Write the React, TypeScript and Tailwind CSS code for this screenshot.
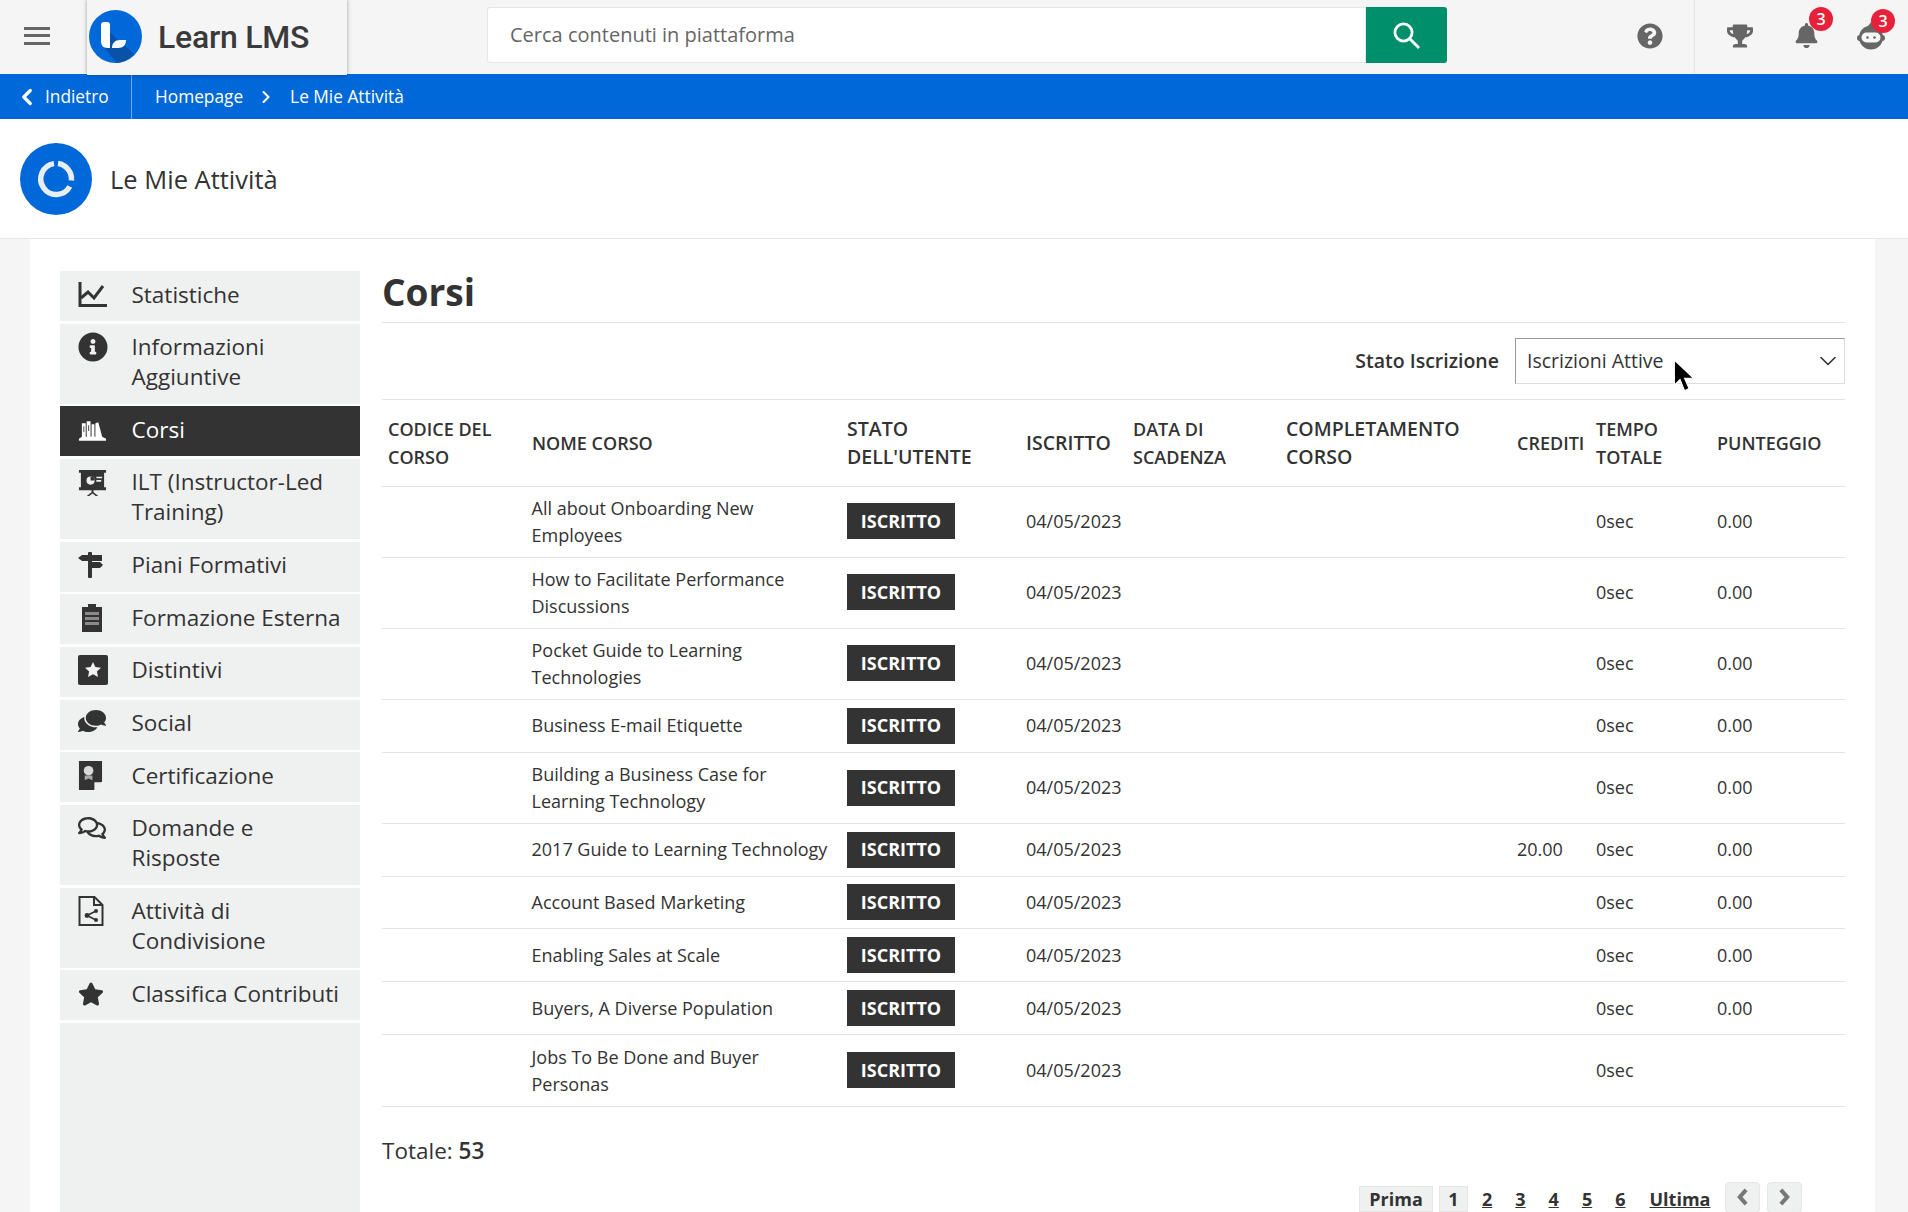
import React from "react";
import { FaBell, FaComments, FaInfoCircle, FaQuestionCircle, FaRegComments, FaStar, FaTrophy } from "react-icons/fa";
import { ChevronDown, ChevronLeft, ChevronRight } from "lucide-react";

const Chart = () => (
  <svg viewBox="0 0 29 26" className="w-[29px] h-[26px]" fill="none" stroke="currentColor">
    <path d="M2 0v23.5h27" strokeWidth="3" />
    <path d="M3 16l7-6 6 6 9-12" strokeWidth="3" />
  </svg>
);
const Sign = () => (
  <svg viewBox="0 0 26 26" className="w-[26px] h-[26px]" fill="currentColor">
    <rect x="10" y="0" width="4" height="26" rx="1" />
    <path d="M4 3h20v6H4L0 6z" />
    <path d="M14 10h8l3 3-3 3h-8z" />
  </svg>
);
const Clip = () => (
  <svg viewBox="0 0 22 29" className="w-[22px] h-[29px]">
    <path d="M1 4h6V1h8v3h6v25H1z" fill="#333" />
    <path d="M4 9h14v3H4zM4 14h14v3H4zM4 19h14v3H4z" fill="#8a8a8a" />
  </svg>
);
const Books = () => (
  <svg viewBox="0 0 30 24" className="w-[29px] h-[24px]" fill="currentColor">
    <path d="M1 21 L4 19 V5 H8 V19 H9 V3 H13 V19 H14 V6 H17 V19 H18 V5 L21 4 L25 19 L29 21 V23 H1 Z" />
    <path d="M10.6 7h.9v6h-.9zM5.6 8h.9v6h-.9z" fill="#333" />
  </svg>
);
const Board = () => (
  <svg viewBox="0 0 30 30" className="w-[29px] h-[29px]" fill="currentColor">
    <path d="M1 2h28v3h-2v15h2v3H16v2l5 4h-2.6L15 26.5 11.6 29H9l5-4v-2H1v-3h2V5H1z" />
    <circle cx="13" cy="13" r="4.2" fill="#eff0f0" />
    <path d="M13 13V8.8a4.2 4.2 0 0 1 4.2 4.2z" fill="#333" />
    <path d="M19 9h6v1.6h-6zM19 12.5h5v1.6h-5z" fill="#eff0f0" />
  </svg>
);
const Badge = () => (
  <svg viewBox="0 0 30 30" className="w-[30px] h-[30px]">
    <rect width="30" height="30" rx="2" fill="#333" />
    <path d="M15 7l2.4 5 5.6.7-4.1 3.8 1.1 5.5-5-2.8-5 2.8 1.1-5.5L7 12.7l5.6-.7z" fill="#f2f2f2" />
  </svg>
);
const Cert = () => (
  <svg viewBox="0 0 26 30" className="w-[25px] h-[29px]">
    <path d="M1 0h24v21l-8 9H1z" fill="#333" />
    <path d="M25 22v1l-7 7h-1v-8z" fill="#eee" />
    <circle cx="11" cy="10" r="5" fill="#d9d9d9" />
    <path d="M7 15h8v5l-4-2-4 2z" fill="#aaa" />
  </svg>
);
const FileShare = () => (
  <svg viewBox="0 0 26 30" className="w-[26px] h-[30px]" fill="none" stroke="#333" strokeWidth="2">
    <path d="M1.5 1h15l8 8v20h-23z" />
    <path d="M16 1v8h8" />
    <path d="M18 15l-9 4.5 9 4.5" strokeWidth="1.6" />
    <circle cx="18" cy="15" r="2" fill="#333" stroke="none" />
    <circle cx="9" cy="19.5" r="2.4" fill="#333" stroke="none" />
    <circle cx="18" cy="24" r="2" fill="#333" stroke="none" />
  </svg>
);
const Robot = () => (
  <svg viewBox="0 0 28 28" className="w-[28px] h-[28px]">
    <path d="M14 0l3.5 5h-7z" fill="#666" />
    <circle cx="14" cy="15.5" r="12" fill="#666" />
    <rect x="0" y="13" width="28" height="6" rx="3" fill="#666" />
    <rect x="4.5" y="10.5" width="19" height="10" rx="5" fill="#f5f5f5" />
    <circle cx="10.5" cy="15.5" r="1.3" fill="#666" />
    <circle cx="17.5" cy="15.5" r="1.3" fill="#666" />
  </svg>
);
const FatChevron = ({ d }: { d: string }) => (
  <svg viewBox="0 0 14 20" className="w-[13px] h-[18px]" fill="none" stroke="currentColor" strokeWidth="4.5">
    <path d={d} />
  </svg>
);

const side: { label: string[]; icon: React.ReactNode; active?: boolean }[] = [
  { label: ["Statistiche"], icon: <Chart /> },
  { label: ["Informazioni", "Aggiuntive"], icon: <FaInfoCircle size={30} /> },
  { label: ["Corsi"], icon: <Books />, active: true },
  { label: ["ILT (Instructor-Led", "Training)"], icon: <Board /> },
  { label: ["Piani Formativi"], icon: <Sign /> },
  { label: ["Formazione Esterna"], icon: <div className="ml-[3px]"><Clip /></div> },
  { label: ["Distintivi"], icon: <Badge /> },
  { label: ["Social"], icon: <FaComments size={28} className="-scale-x-100 -translate-y-[2px]" /> },
  { label: ["Certificazione"], icon: <Cert /> },
  { label: ["Domande e", "Risposte"], icon: <FaRegComments size={28} /> },
  { label: ["Attività di", "Condivisione"], icon: <FileShare /> },
  { label: ["Classifica Contributi"], icon: <FaStar size={26} /> },
];

const rows: { name: string[]; cred?: string; score?: string }[] = [
  { name: ["All about Onboarding New", "Employees"], score: "0.00" },
  { name: ["How to Facilitate Performance", "Discussions"], score: "0.00" },
  { name: ["Pocket Guide to Learning", "Technologies"], score: "0.00" },
  { name: ["Business E-mail Etiquette"], score: "0.00" },
  { name: ["Building a Business Case for", "Learning Technology"], score: "0.00" },
  { name: ["2017 Guide to Learning Technology"], cred: "20.00", score: "0.00" },
  { name: ["Account Based Marketing"], score: "0.00" },
  { name: ["Enabling Sales at Scale"], score: "0.00" },
  { name: ["Buyers, A Diverse Population"], score: "0.00" },
  { name: ["Jobs To Be Done and Buyer", "Personas"] },
];

const heads: { l: string[]; big?: boolean }[] = [
  { l: ["CODICE DEL", "CORSO"] },
  { l: ["NOME CORSO"] },
  { l: ["STATO", "DELL'UTENTE"], big: true },
  { l: ["ISCRITTO"], big: true },
  { l: ["DATA DI", "SCADENZA"] },
  { l: ["COMPLETAMENTO", "CORSO"], big: true },
  { l: ["CREDITI"] },
  { l: ["TEMPO", "TOTALE"] },
  { l: ["PUNTEGGIO"] },
];

const widths = ["w-[144px]", "w-[315px]", "w-[179px]", "w-[107px]", "w-[153px]", "w-[231px]", "w-[79px]", "w-[121px]", "w-[134px]"];

export default function App() {
  return (
    <div className="relative h-[1212px] overflow-hidden flex flex-col bg-white text-[#333] font-['Open_Sans',sans-serif]">
      <header className="h-[74px] shrink-0 bg-[#f5f5f5] flex items-center relative">
        <button className="w-[87px] h-full flex items-center pl-[24px] pb-[2px] text-[#666]">
          <svg viewBox="0 0 26 18" className="w-[26px] h-[18px]" fill="currentColor">
            <rect width="26" height="3" />
            <rect y="7" width="26" height="3" />
            <rect y="15" width="26" height="3" />
          </svg>
        </button>
        <div className="w-[260px] h-[75px] self-start z-10 bg-[#f5f5f5] flex items-center pl-[2px] pb-[2px] shadow-[0_0_4px_rgba(0,0,0,0.35)]">
          <svg viewBox="0 0 53 53" className="w-[53px] h-[53px] shrink-0">
            <circle cx="26.5" cy="26.5" r="26.5" fill="#0068d9" />
            <path d="M18 20 L45 44 A26.5 26.5 0 0 1 28 53 L16 38 Z" fill="#0a52a8" />
            <path d="M15 12h3a3 3 0 0 1 3 3v23h-3a6 6 0 0 1-6-6V15a3 3 0 0 1 3-3z" fill="#fff" />
            <path d="M23 38c0-5 3-8 8-8h6c0 5-3 8-8 8z" fill="#fff" />
          </svg>
          <span className="ml-[16px] text-[32px] font-medium tracking-[-0.25px] text-[#3a3a3a] font-['Roboto',sans-serif]">Learn LMS</span>
        </div>
        <div className="ml-[140px] flex h-[56px] w-[960px] self-start mt-[7px]">
          <div className="flex-1 bg-white border border-[#e6e6e6] rounded-l-[3px] flex items-center pl-[22px] text-[20px] text-[#666]">
            Cerca contenuti in piattaforma
          </div>
          <div className="w-[81px] bg-[#008f6b] rounded-r-[3px] flex items-center justify-center text-white">
            <svg viewBox="0 0 27 27" className="w-[27px] h-[27px]" fill="none" stroke="currentColor" strokeWidth="2.8">
              <circle cx="10.5" cy="10.5" r="8.6" />
              <path d="M16.5 16.5L26 26" />
            </svg>
          </div>
        </div>
        <div className="flex-1 flex items-center h-full text-[#666] relative">
          <div className="ml-[190px] w-[58px] h-full flex items-center border-r border-[#e3e3e3] pb-[3px]">
            <FaQuestionCircle size={26} />
          </div>
          <div className="ml-[32px] mb-[3px] relative w-[27px]"><FaTrophy size={26} /></div>
          <div className="ml-[40px] mb-[3px] relative">
            <FaBell size={25} />
            <span className="absolute -top-[16px] left-[15px] w-[24px] h-[24px] rounded-full bg-[#e8213a] text-white text-[16px] font-semibold flex items-center justify-center">3</span>
          </div>
          <div className="ml-[38px] mb-[3px] relative">
            <Robot />
            <span className="absolute -top-[13px] left-[14px] w-[24px] h-[24px] rounded-full bg-[#e8213a] text-white text-[16px] font-semibold flex items-center justify-center">3</span>
          </div>
        </div>
      </header>

      <nav className="h-[45px] shrink-0 bg-[#0068d9] flex items-center text-white text-[17.3px] font-medium">
        <div className="w-[132px] h-full border-r border-[#6aa8ea] flex items-center pl-[14px]">
          <ChevronLeft size={26} strokeWidth={3} />
          <span className="ml-[5px]">Indietro</span>
        </div>
        <span className="ml-[23px]">Homepage</span>
        <ChevronRight size={20} strokeWidth={2.5} className="ml-[13px]" />
        <span className="ml-[14px]">Le Mie Attività</span>
      </nav>

      <div className="h-[120px] shrink-0 border-b border-[#e6e6e6] flex items-center pl-[20px]">
        <svg viewBox="0 0 72 72" className="w-[72px] h-[72px]">
          <circle cx="36" cy="36" r="36" fill="#0068d9" />
          <path d="M34 20.6 A15.5 15.5 0 1 0 49.8 43.5" fill="none" stroke="#e8eef5" strokeWidth="5.5" />
          <path d="M38 20.6 A15.5 15.5 0 0 1 51.4 37.5" fill="none" stroke="#e8eef5" strokeWidth="5.5" />
        </svg>
        <h1 className="ml-[18px] mt-[2px] text-[25.5px] font-medium">Le Mie Attività</h1>
      </div>

      <div className="flex-1 min-h-0 bg-[#f5f5f5] pl-[30px] pr-[33px]">
        <div className="h-full bg-white flex pl-[30px] pr-[30px] pt-[32px] gap-[22px]">
          <aside className="w-[300px] shrink-0 flex flex-col gap-[2.6px]">
            {side.map((s) => (
              <div key={s.label[0]} className={`flex pl-[18px] pr-[6px] pt-[8.5px] pb-[11.5px] text-[22.5px] leading-[30px] ${s.active ? "bg-[#333] text-white" : "bg-[#eff0f0] text-[#333]"}`}>
                <div className="w-[53.5px] h-[30px] shrink-0 flex items-center">{s.icon}</div>
                <div className={s.label.length > 1 ? "h-[60.2px]" : ""}>
                  {s.label.map((l) => (
                    <div key={l} className="whitespace-nowrap">{l}</div>
                  ))}
                </div>
              </div>
            ))}
            <div className="flex-1 bg-[#eff0f0]" />
          </aside>

          <main className="flex-1 min-w-0">
            <h2 className="h-[52px] border-b border-[#e3e3e3] text-[37px] font-bold leading-[42px]">Corsi</h2>
            <div className="h-[76px] flex items-center justify-end">
              <span className="text-[19.5px] font-semibold mr-[16px]">Stato Iscrizione</span>
              <div className="w-[330px] h-[46px] border-t border-l border-t-[#999] border-l-[#999] border-b border-r border-b-[#ddd] border-r-[#ddd] flex items-center justify-between pl-[11px] pr-[2px] text-[19.5px]">
                Iscrizioni Attive
                <ChevronDown size={28} strokeWidth={1.4} />
              </div>
            </div>
            <table className="w-full table-fixed border-collapse text-[18px] leading-[27px] border-t border-[#e3e3e3]">
              <colgroup>
                {widths.map((w) => <col key={w} className={w} />)}
              </colgroup>
              <thead>
                <tr className="h-[87px] border-b border-[#e3e3e3]">
                  {heads.map((h) => (
                    <th key={h.l[0]} className={`px-[6px] text-left font-semibold align-middle leading-[28px] whitespace-nowrap ${h.big ? "text-[19.5px]" : ""}`}>
                      {h.l.map((l) => <div key={l}>{l}</div>)}
                    </th>
                  ))}
                </tr>
              </thead>
              <tbody>
                {rows.map((r, i) => {
                  const up = i < 3 ? "pb-[2px]" : "";
                  return (
                    <tr key={r.name[0]} className={`border-b border-[#e3e3e3] ${i === 9 ? "h-[72px]" : r.name.length > 1 ? "h-[71px]" : "h-[52.8px]"}`}>
                      <td />
                      <td className={`pl-[5.5px] pr-[6px] whitespace-nowrap ${i === 9 ? "pt-[1px]" : ""}`}>{r.name.map((l) => <div key={l}>{l}</div>)}</td>
                      <td className={`px-[6px] ${up}`}>
                        <span className="inline-flex items-center justify-center w-[108px] h-[36px] bg-[#333] text-white font-bold text-[18px] align-middle">ISCRITTO</span>
                      </td>
                      <td className={`px-[6px] ${up}`}>04/05/2023</td>
                      <td />
                      <td />
                      <td className="px-[6px]">{r.cred}</td>
                      <td className={`px-[6px] ${up}`}>0sec</td>
                      <td className={`px-[6px] ${up}`}>{r.score}</td>
                    </tr>
                  );
                })}
              </tbody>
            </table>
            <div className="mt-[29px] text-[22.5px] leading-[30px]">Totale: <span className="font-semibold">53</span></div>
            <div className="mt-[16px] flex items-center font-bold text-[18px] leading-[24px] pl-[977px]">
              <span className="w-[74px] h-[26px] bg-[#eff0f0] border border-[#e6e6e6] flex items-center justify-center">Prima</span>
              <span className="ml-[6px] w-[29px] h-[26px] bg-[#eff0f0] border border-[#e6e6e6] flex items-center justify-center">1</span>
              {["2", "3", "4", "5", "6"].map((p, i) => (
                <span key={p} className={`underline ${i === 0 ? "ml-[14px]" : "ml-[23px]"}`}>{p}</span>
              ))}
              <span className="ml-[24px] underline">Ultima</span>
              <span className="ml-[15px] mb-[3px] w-[35px] h-[31px] rounded-[4px] bg-[#eff0f0] border border-[#e6e6e6] flex items-center justify-center text-[#777]"><FatChevron d="M11 2L4 10l7 8" /></span>
              <span className="ml-[7px] mb-[3px] w-[35px] h-[31px] rounded-[4px] bg-[#eff0f0] border border-[#e6e6e6] flex items-center justify-center text-[#777]"><FatChevron d="M3 2l7 8-7 8" /></span>
            </div>
          </main>
        </div>
      </div>

      <svg viewBox="0 0 19 30" className="absolute left-[1673px] top-[359px] w-[22px] h-[34px]">
        <path d="M1 1 V23 L6 18 L10 28 L14 26 L10 17 L18 17 Z" fill="#000" stroke="#fff" strokeWidth="1" />
      </svg>
    </div>
  );
}
